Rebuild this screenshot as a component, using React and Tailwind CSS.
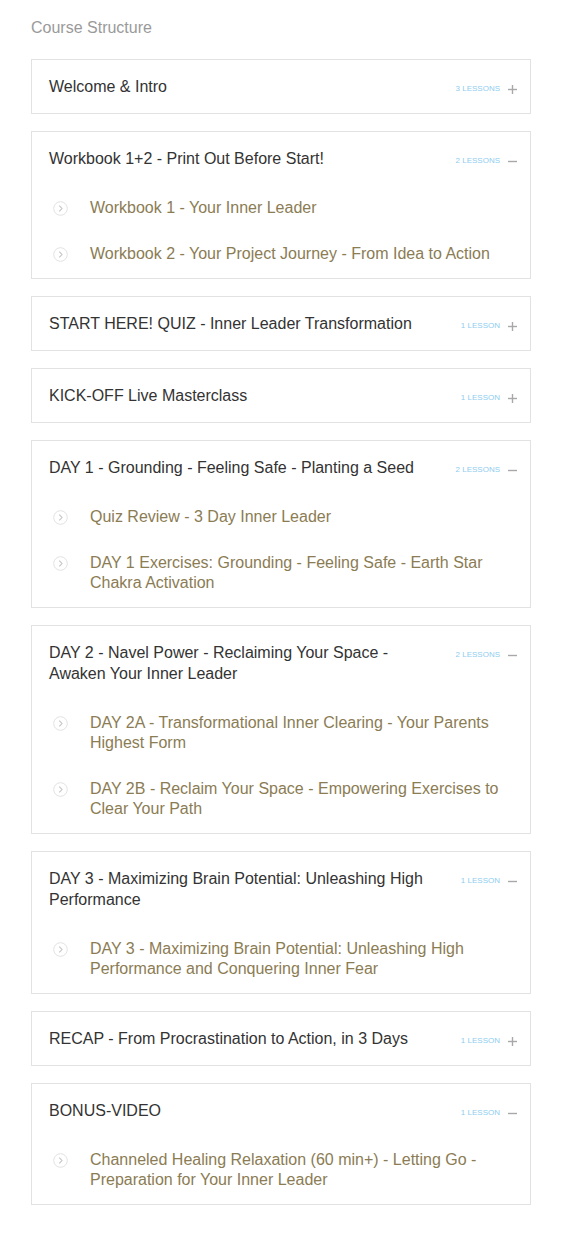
const sections = [
  { title: 'Welcome & Intro', count: '3 Lessons', open: false, lessons: [] },
  {
    title: 'Workbook 1+2 - Print Out Before Start!',
    count: '2 Lessons',
    open: true,
    lessons: ['Workbook 1 - Your Inner Leader', 'Workbook 2 - Your Project Journey - From Idea to Action'],
  },
  { title: 'START HERE! QUIZ - Inner Leader Transformation', count: '1 Lesson', open: false, lessons: [] },
  { title: 'KICK-OFF Live Masterclass', count: '1 Lesson', open: false, lessons: [] },
  {
    title: 'DAY 1 - Grounding - Feeling Safe - Planting a Seed',
    count: '2 Lessons',
    open: true,
    lessons: [
      'Quiz Review - 3 Day Inner Leader',
      'DAY 1 Exercises: Grounding - Feeling Safe - Earth Star Chakra Activation',
    ],
  },
  {
    title: 'DAY 2 - Navel Power - Reclaiming Your Space - Awaken Your Inner Leader',
    count: '2 Lessons',
    open: true,
    lessons: [
      'DAY 2A - Transformational Inner Clearing - Your Parents Highest Form',
      'DAY 2B - Reclaim Your Space - Empowering Exercises to Clear Your Path',
    ],
  },
  {
    title: 'DAY 3 - Maximizing Brain Potential: Unleashing High Performance',
    count: '1 Lesson',
    open: true,
    lessons: ['DAY 3 - Maximizing Brain Potential: Unleashing High Performance and Conquering Inner Fear'],
  },
  { title: 'RECAP - From Procrastination to Action, in 3 Days', count: '1 Lesson', open: false, lessons: [] },
  {
    title: 'BONUS-VIDEO',
    count: '1 Lesson',
    open: true,
    lessons: ['Channeled Healing Relaxation (60 min+) - Letting Go - Preparation for Your Inner Leader'],
  },
]

function LessonIcon() {
  return (
    <svg width="15" height="15" viewBox="0 0 15 15" className="flex-shrink-0">
      <circle cx="7.5" cy="7.5" r="6.8" fill="none" stroke="#e2e2e2" strokeWidth="1" />
      <path d="M6.3 4.6 L9 7.5 L6.3 10.4" fill="none" stroke="#c4c4c4" strokeWidth="1.1" />
    </svg>
  )
}

function Toggle({ open }) {
  return (
    <svg width="9" height="9" viewBox="0 0 9 9" className="flex-shrink-0">
      <rect x="0" y="3.8" width="9" height="1.4" fill="#a8a8a8" />
      {!open && <rect x="3.8" y="0" width="1.4" height="9" fill="#a8a8a8" />}
    </svg>
  )
}

export default function App() {
  return (
    <div className="min-h-screen bg-white px-[31px] pt-[18px] pb-8" style={{ fontFamily: '"Liberation Sans", Arial, sans-serif' }}>
      <h2 className="text-[16px] leading-[19px] text-[#9a9a9a] mb-[22px]">Course Structure</h2>

      <div className="flex flex-col gap-[17px] w-[500px]">
        {sections.map((s) => (
          <div key={s.title} className="border border-[#e2e2e2] bg-white">
            {/* Header */}
            <div className="flex items-start pl-[17px] pr-[13px] py-[16px]">
              <p className="flex-1 text-[16px] leading-[21px] text-[#333333] pr-6">{s.title}</p>
              <div className="flex items-center gap-[8px] pt-[8px]">
                <span className="text-[8px] leading-[10px] uppercase text-[#8fcdf0]">{s.count}</span>
                <Toggle open={s.open} />
              </div>
            </div>

            {/* Lessons */}
            {s.open && (
              <div className="pb-px">
                {s.lessons.map((l) => (
                  <div key={l} className="flex items-start pl-[21px] pr-[30px] py-[13px]">
                    <div className="pt-[3px]">
                      <LessonIcon />
                    </div>
                    <p className="ml-[22px] text-[16px] leading-[20px] text-[#8b7c54]">{l}</p>
                  </div>
                ))}
              </div>
            )}
          </div>
        ))}
      </div>
    </div>
  )
}
